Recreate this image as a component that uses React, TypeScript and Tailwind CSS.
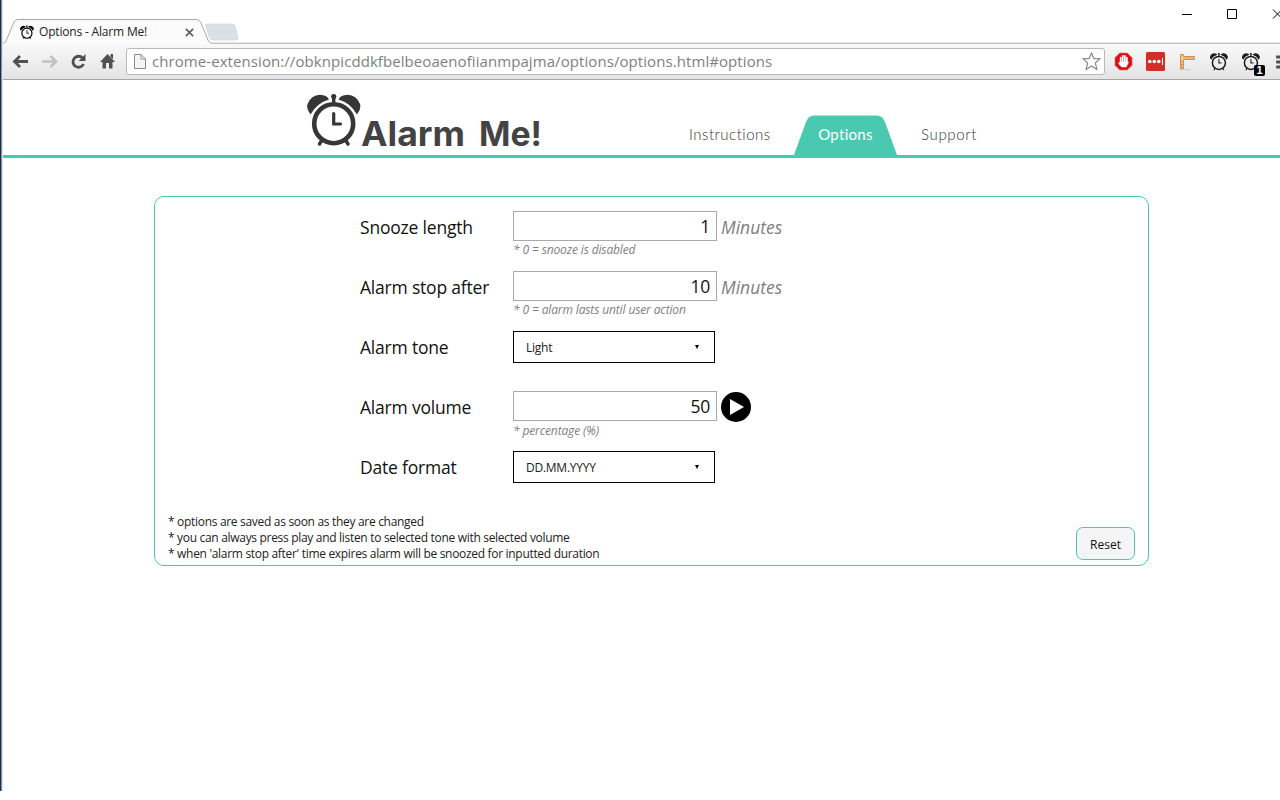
import React from "react";

type ClockProps = { className: string };

function Clock({ className }: ClockProps) {
  return (
    <svg viewBox="0 0 54 54" className={className}>
      <path d="M3.500 20.500Q-1 15 .5 10Q4 1 13 .7Q20 1 22 5.500Q10 9 3.500 20.500ZM50 20.500Q54.500 15 53 10Q49.500 1 40.500 .7Q33.500 1 31.500 5.500Q43.500 9 50 20.500Z" fill="currentColor" />
      <circle cx="26.700" cy="29.700" r="19.500" fill="none" stroke="currentColor" strokeWidth="4.600" />
      <path d="M26.700 2V10M15 46L12.500 50M38.500 46L41 50" stroke="currentColor" strokeWidth="3.400" strokeLinecap="round" />
      <circle cx="26.700" cy="2.600" r="2.600" fill="currentColor" />
      <path d="M26.700 19.500V30H33.500" fill="none" stroke="currentColor" strokeWidth="3.200" strokeLinecap="round" />
    </svg>
  );
}

function TabStrip() {
  return (
    <div className="relative flex h-[44px] shrink-0 items-end">
      <svg className="absolute left-0 top-0 h-[44px] w-full" viewBox="0 0 1277 44">
        <path d="M202.500 26Q202 24 204.500 24H228Q231 24 232 26L235 38Q235 40 233 40H209.500Q207.500 40 206.500 38Z" fill="#dbe0e6" stroke="#cdd2d8" strokeWidth="0.6" />
        <path d="M0 43.5H1L12 22Q13 19.5 16 19.5H193Q196 19.5 197.500 22L205.500 41Q206.500 43 209 43H1277V44H0Z" fill="#fbfbfb" />
        <path d="M-1 43.500Q2 43.500 3 41L11 22Q12 19.500 15 19.500H193Q196 19.500 197.500 22L205.500 41Q206.500 43.200 209 43.200H1277" fill="none" stroke="#a9a9a9" />
      </svg>
      <div className="relative ml-[17px] flex h-[24px] w-[180px] items-center">
        <Clock className="h-[15px] w-[14px] text-black" />
        <span className="ml-[5px] whitespace-nowrap font-['Open_Sans',sans-serif] text-[12px] tracking-[-0.18px] text-[#222]">Options - Alarm Me!</span>
        <svg viewBox="0 0 10 10" className="ml-auto mr-[6px] h-[9px] w-[9px]"><path d="M1 1L9 9M9 1L1 9" stroke="#5c5c5c" strokeWidth="1.8" /></svg>
      </div>
      <svg className="absolute right-0 top-[8px] h-[14px] w-[103px]" viewBox="0 0 103 14" stroke="#000" fill="none">
        <path d="M5 6.500H15M50.500 1.500H59.500V10.500H50.500ZM96 1.500L105 10.500M96 10.500L105 1.500" />
      </svg>
    </div>
  );
}

function Toolbar() {
  return (
    <div className="flex h-[36px] shrink-0 items-center border-b border-[#a6a6a6] bg-linear-to-b from-[#f9f9f9] to-[#e4e4e4]">
      <svg viewBox="0 0 120 36" className="h-[36px] w-[123px] shrink-0" preserveAspectRatio="xMinYMin">
        <path d="M11.500 17.500H25M17 12L11.500 17.500L17 23" fill="none" stroke="#505050" strokeWidth="2.800" />
        <path d="M39 17.500H52M47.500 12L53 17.500L47.500 23" fill="none" stroke="#c2c2c2" strokeWidth="2.600" />
        <path d="M79.500 14A5.500 5.500 0 1 0 80.500 20" fill="none" stroke="#505050" strokeWidth="2.800" />
        <path d="M82.500 10V17H75.500Z" fill="#505050" />
        <path d="M97 18L104.500 10L112 18H109.500V24.500H106V19H103V24.500H99.500V18Z" fill="#505050" />
        <path d="M107.500 10H110V15L107.500 13Z" fill="#505050" />
      </svg>
      <div className="flex h-[27px] w-[979px] shrink-0 items-center rounded-[3px] border border-[#b9b9b9] bg-white">
        <svg viewBox="0 0 12 15" className="ml-[7px] h-[15px] w-[12px]" fill="#f4f4f4" stroke="#8a8a8a"><path d="M.5.5H7L11.500 5V14.500H.5ZM7 .5V5H11.500" /></svg>
        <span className="ml-[6px] whitespace-nowrap font-['Open_Sans',sans-serif] text-[15px] tracking-[0.075px] text-[#808080]">chrome-extension://obknpicddkfbelbeoaenofiianmpajma/options/options.html#options</span>
        <svg viewBox="0 0 20 20" className="ml-auto mr-[3px] h-[19px] w-[19px]" fill="#fff" stroke="#8b8b8b" strokeWidth="1.300" strokeLinejoin="round"><path d="M10 1L12.600 7H19L14 11.500L15.700 18.500L10 14.700L4.300 18.500L6 11.500L1 7H7.400Z" /></svg>
      </div>
      <svg viewBox="0 0 20 20" className="ml-[9px] h-[19px] w-[19px] shrink-0">
        <path d="M6 1H14L19 6V14L14 19H6L1 14V6Z" fill="#d90f18" stroke="#e87777" strokeWidth=".6" />
        <path d="M7 12V6M9.200 10V4M11.400 10V4M13.500 11V6" stroke="#fff" strokeWidth="1.800" strokeLinecap="round" />
        <path d="M6.100 10H14.400L15.700 10.500L13 16H8.500Q4.500 13 4.500 11L6.100 11Z" fill="#fff" />
      </svg>
      <svg viewBox="0 0 19 19" className="ml-[13px] h-[19px] w-[19px] shrink-0"><rect width="19" height="19" rx="1.500" fill="#d32d27" /><circle cx="3.800" cy="9.500" r="1.800" fill="#fff" /><circle cx="8.300" cy="9.500" r="1.800" fill="#fff" /><circle cx="12.800" cy="9.500" r="1.800" fill="#fff" /><path d="M16.500 6V13" stroke="#fff" /></svg>
      <svg viewBox="0 0 18 18" className="ml-[13px] h-[18px] w-[18px] shrink-0"><path d="M1 16.500H12" stroke="#ccc" /><path d="M2.500 1.500H5.500V3.500H16.500V6.500H5.500V15.500H2.500Z" fill="#f6c987" stroke="#d1904f" /><path d="M3 9H4.500M3 11.500H4.500M3 14H4.500M8 4V5.500M11 4V5.500M14 4V5.500" stroke="#b87936" /></svg>
      <Clock className="ml-[14px] h-[18px] w-[18px] shrink-0 text-[#1b1b1b]" />
      <div className="relative ml-[14px] h-[18px] w-[18px] shrink-0">
        <Clock className="h-[18px] w-[18px] text-[#1b1b1b]" />
        <span className="absolute left-[12px] top-[12px] flex h-[11px] w-[11px] items-center justify-center rounded-[2px] bg-black font-['Liberation_Sans',sans-serif] text-[11px] font-bold text-white">1</span>
      </div>
      <svg viewBox="0 0 8 18" className="ml-[15px] h-[18px] w-[8px] shrink-0" fill="#505050"><rect x="1" y="2.500" width="6" height="3" rx="1" /><rect x="1" y="7.500" width="6" height="3" rx="1" /><rect x="1" y="12.500" width="6" height="3" rx="1" /></svg>
    </div>
  );
}

function SiteHeader() {
  return (
    <header className="flex h-[78px] shrink-0 border-b-[3px] border-[#48c9b0]">
      <Clock className="ml-[304px] mt-[14px] h-[54px] w-[54px] text-[#363636]" />
      <svg viewBox="0 0 184 54" className="mt-[21px] h-[54px] w-[184px]">
        <text x="0" y="45" textLength="104" lengthAdjust="spacingAndGlyphs" fill="#434343" className="font-['Inter',sans-serif] text-[34px] font-bold">Alarm</text>
        <text x="118" y="45" textLength="63" lengthAdjust="spacingAndGlyphs" fill="#434343" className="font-['Inter',sans-serif] text-[34px] font-bold">Me!</text>
      </svg>
      <nav className="ml-[144px] flex items-end font-['Lato',sans-serif] text-[15px] font-light text-[#333]">
        <a className="flex h-[40px] w-[105px] items-center pb-[2px] tracking-[0.5px]">Instructions</a>
        <a className="relative flex h-[40px] w-[103px] items-center justify-center pb-[2px] font-normal tracking-[0.3px] text-white">
          <svg viewBox="0 0 103 40" className="absolute inset-0 h-full w-full"><path d="M0 40L12 7Q14.500 .5 20 .5H83Q88.500 .5 91 7L103 40Z" fill="#48c9b0" /></svg>
          <span className="relative">Options</span>
        </a>
        <a className="ml-[24px] flex h-[40px] items-center pb-[2px] tracking-[0.65px]">Support</a>
      </nav>
    </header>
  );
}

type RowProps = { label: string; note?: string; children: React.ReactNode };

function Row({ label, note, children }: RowProps) {
  return (
    <div className="flex h-[60px]">
      <label className="w-[153px] whitespace-nowrap pt-[3px] text-[17.5px] leading-[26px] tracking-[-0.2px] text-[#111]">{label}</label>
      <div>
        <div className="flex items-start">{children}</div>
        {note && <p className="text-[12px] italic leading-[18px] tracking-[-0.13px] text-[#808080]">{note}</p>}
      </div>
    </div>
  );
}

function NumberBox({ value }: { value: string }) {
  return <div className="flex h-[30px] w-[204px] items-center justify-end border border-[#a9a9a9] pr-[6px] text-[17.5px] tracking-[-0.3px] text-[#111]">{value}</div>;
}

function Unit() {
  return <span className="ml-[4px] pt-[3px] text-[17.5px] italic leading-[26px] text-[#808080]">Minutes</span>;
}

function Select({ value }: { value: string }) {
  return (
    <div className="flex h-[32px] w-[202px] items-center justify-between border border-black pl-[12px] pr-[15px] text-[12px] tracking-[-0.25px] text-[#222]">
      <span className="pt-[2px]">{value}</span>
      <svg viewBox="0 0 4 4" className="h-[4px] w-[4px]"><path d="M0 0H4L2 4Z" /></svg>
    </div>
  );
}

export default function App() {
  return (
    <div className="flex h-[800px] w-[1280px] items-start overflow-hidden bg-white">
      <div className="h-[791px] w-[3px] shrink-0 border-r border-[#e8e4e2] bg-linear-to-r from-[#292c31] from-50% to-[#7595bd] to-50%" />
      <div className="flex h-[791px] w-[1277px] shrink-0 flex-col">
        <TabStrip />
        <Toolbar />
        <SiteHeader />
        <main className="ml-[151px] mt-[38px] flex h-[370px] w-[995px] flex-col rounded-[10px] border border-[#48c9b0] pt-[14px] font-['Open_Sans',sans-serif]">
          <div className="pl-[205px]">
            <Row label="Snooze length" note="* 0 = snooze is disabled"><NumberBox value="1" /><Unit /></Row>
            <Row label="Alarm stop after" note="* 0 = alarm lasts until user action"><NumberBox value="10" /><Unit /></Row>
            <Row label="Alarm tone"><Select value="Light" /></Row>
            <Row label="Alarm volume" note="* percentage (%)">
              <NumberBox value="50" />
              <svg viewBox="0 0 30 30" className="ml-[4px] mt-[1px] h-[30px] w-[30px]"><circle cx="15" cy="15" r="15" /><path d="M9 7L23 15L9 23Z" fill="#fff" /></svg>
            </Row>
            <Row label="Date format"><Select value="DD.MM.YYYY" /></Row>
          </div>
          <div className="flex items-start justify-between px-[13px]">
            <div className="pt-[3px] text-[12px] leading-[16px] tracking-[-0.31px] text-[#222]">
              <p>* options are saved as soon as they are changed</p>
              <p>* you can always press play and listen to selected tone with selected volume</p>
              <p>* when 'alarm stop after' time expires alarm will be snoozed for inputted duration</p>
            </div>
            <button className="mt-[16px] h-[33px] w-[59px] rounded-[7px] border border-[#48c9b0] bg-[#f5f5f5] pt-[2px] text-[12px] text-[#111]">Reset</button>
          </div>
        </main>
      </div>
    </div>
  );
}
